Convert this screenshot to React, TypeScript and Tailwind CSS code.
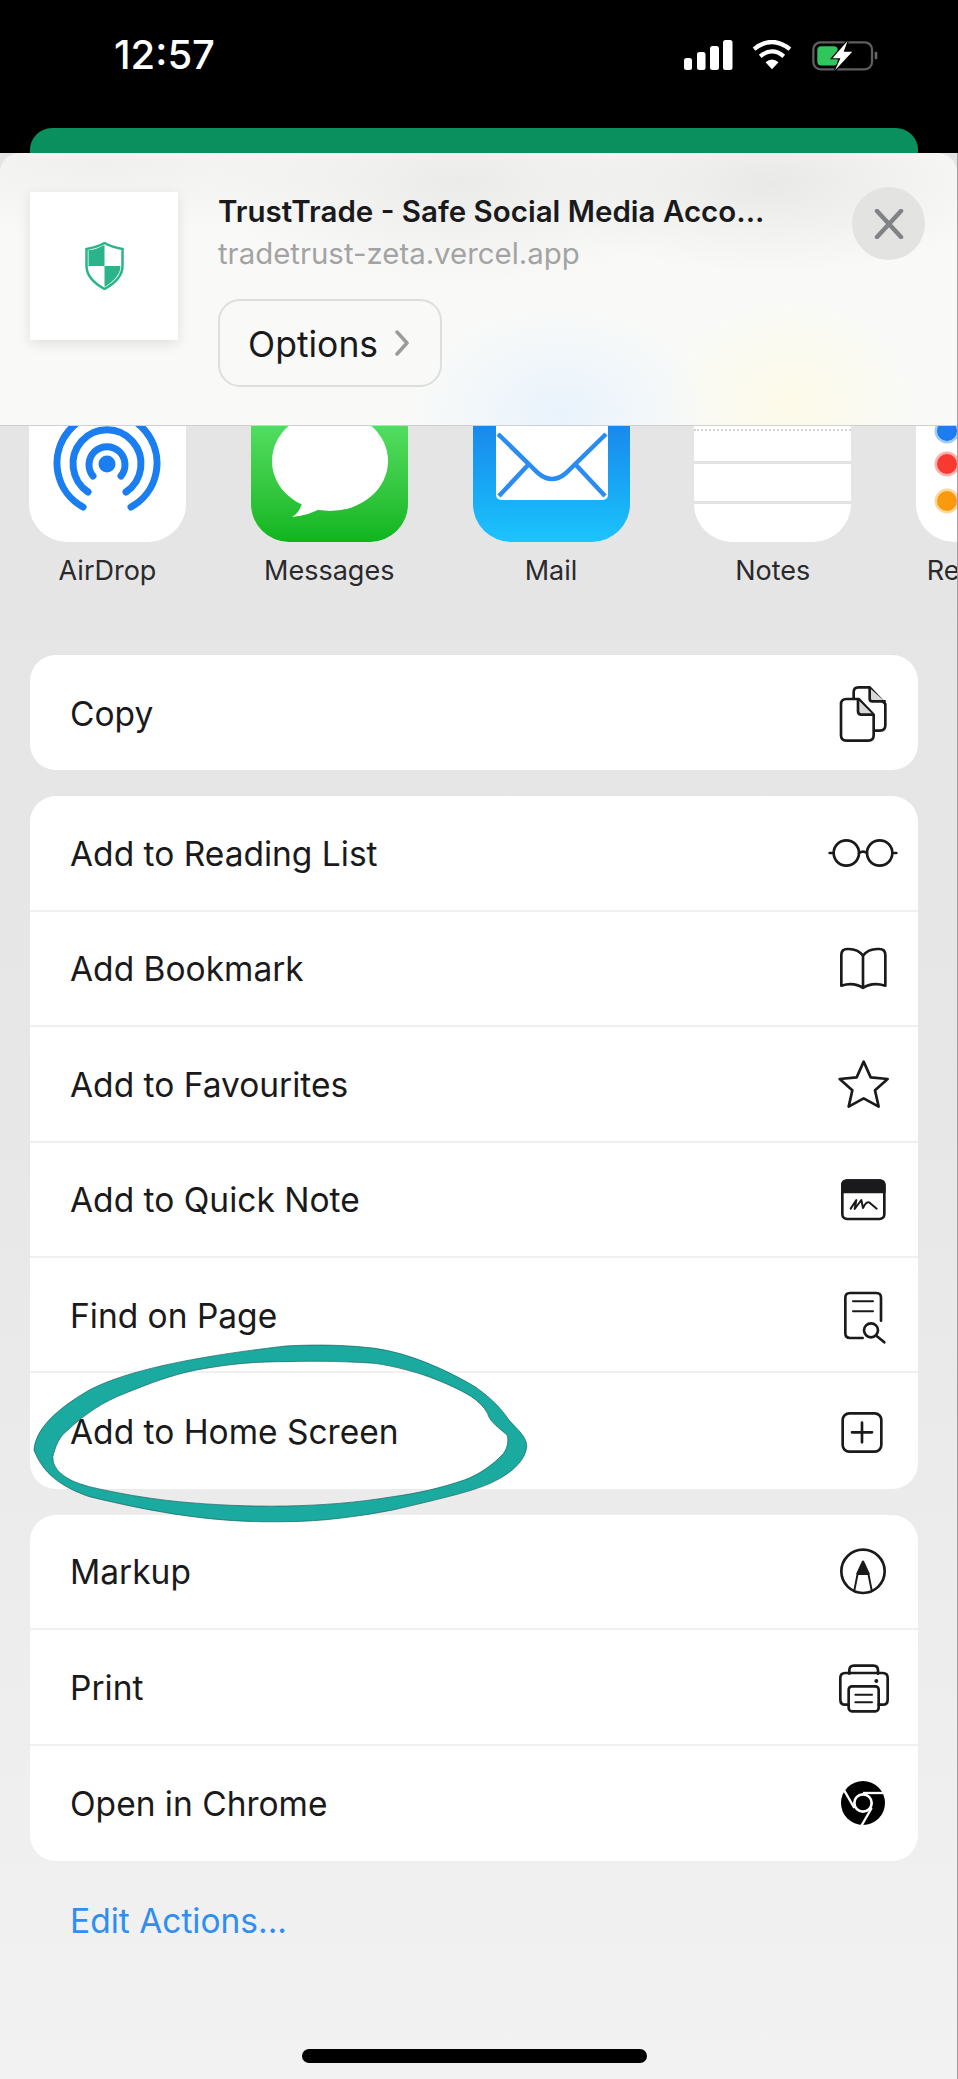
import * as React from 'react';

const font = 'font-["Inter","Noto_Sans",sans-serif]';
const ink = '#1a1a1c';

// icons are drawn on a 210 unit square shown at 70px
function RowIcon({ children }: { children: React.ReactNode }) {
    return (
        <svg
            viewBox="0 0 210 210"
            width={70}
            height={70}
            fill="none"
            stroke={ink}
            strokeWidth={8}
            strokeLinecap="round"
            strokeLinejoin="round"
        >
            {children}
        </svg>
    );
}

const CopyIcon = () => (
    <RowIcon>
        <path d="M77 60V42Q77 28 91 28H125L172 78V142Q172 158 156 158H140" />
        <path d="M125 30V62Q125 70 133 70H170" fill="#d8d8d8" />
        <path d="M55 63H92L137 110V172Q137 188 121 188H55Q39 188 39 172V79Q39 63 55 63Z" fill="#fff" />
        <path d="M90 65V100Q90 110 100 110H135" fill="#d8d8d8" />
    </RowIcon>
);

const GlassesIcon = () => (
    <RowIcon>
        <circle cx="55" cy="105" r="38" />
        <circle cx="155" cy="105" r="38" />
        <path d="M93 105Q105 97 117 105M5 105H17M193 105H205" />
    </RowIcon>
);

const BookIcon = () => (
    <RowIcon>
        <path d="M105 68Q90 48 62 48H58Q40 48 40 66V158Q78 146 105 165Q132 146 172 158V66Q172 48 154 48H148Q120 48 105 68V165" />
    </RowIcon>
);

const StarIcon = () => (
    <RowIcon>
        <path d="M107 38L128 85L179 90L141 124L152 173L107 148L62 173L73 124L35 90L86 85Z" />
    </RowIcon>
);

const QuickNoteIcon = () => (
    <RowIcon>
        <rect x="43" y="50" width="126" height="115" rx="14" />
        <path d="M43 64Q43 50 57 50H155Q169 50 169 64V84H43Z" fill={ink} />
        <path d="M68 134L85 108L80 135L100 108L105 132Q115 110 125 116L146 134" strokeWidth={6} />
    </RowIcon>
);

const FindIcon = () => (
    <RowIcon>
        <path d="M159 122V53Q159 39 145 39H66Q52 39 52 53V160Q52 174 66 174H104" />
        <path d="M75 64H135M75 94H135" strokeWidth={6} />
        <circle cx="129" cy="151" r="21" />
        <path d="M145 167L169 187" />
    </RowIcon>
);

const HomeIcon = () => (
    <RowIcon>
        <rect x="44" y="52" width="116" height="115" rx="20" />
        <path d="M102 80V139M72 109H132" />
    </RowIcon>
);

const MarkupIcon = () => (
    <RowIcon>
        <circle cx="105" cy="106" r="65" />
        <path d="M105 78L89 113H121Z" fill={ink} />
        <path d="M89 113L79 163M121 113L131 163" strokeWidth={6} />
    </RowIcon>
);

const PrintIcon = () => (
    <RowIcon>
        <path d="M64 65V55Q64 41 78 41H136Q150 41 150 55V65" />
        <path d="M62 158H52Q37 158 37 143V78Q37 63 52 63H164Q179 63 179 78V143Q179 158 164 158H152" />
        <rect x="62" y="103" width="90" height="75" rx="10" />
        <path d="M82 128H132M82 151H132" strokeWidth={6} />
        <circle cx="145" cy="87" r="6" fill={ink} stroke="none" />
    </RowIcon>
);

const ChromeIcon = () => (
    <RowIcon>
        <circle cx="105" cy="105" r="66" fill="#000" stroke="none" />
        <circle cx="105" cy="105" r="26" fill="#000" stroke="#fff" strokeWidth={8} />
        <path d="M105 75H172" stroke="#fff" strokeWidth={7} strokeLinecap="butt" />
        <path d="M105 75H172" stroke="#fff" strokeWidth={7} strokeLinecap="butt" transform="rotate(120 105 105)" />
        <path d="M105 75H172" stroke="#fff" strokeWidth={7} strokeLinecap="butt" transform="rotate(240 105 105)" />
    </RowIcon>
);

type Row = { label: string; icon: React.ReactNode };

function RowGroup({ rows }: { rows: Row[] }) {
    return (
        <div className="ml-[30px] mr-[39px] rounded-[26px] bg-white overflow-hidden divide-y-2 divide-[#f0f0f0]">
            {rows.map((row) => (
                <div key={row.label} className="flex h-[115.4px] items-center justify-between pl-[40px] pr-[20px]">
                    <span className="pt-[2px] text-[33.5px] text-[#1a1a1c]">{row.label}</span>
                    <span className="flex">{row.icon}</span>
                </div>
            ))}
        </div>
    );
}

function AppTile({ label, className, children }: { label: string; className?: string; children: React.ReactNode }) {
    return (
        <div className="flex w-[157px] shrink-0 flex-col items-center">
            <div className={'h-[155px] w-[157px] overflow-hidden rounded-[38px] ' + (className ?? 'bg-white')}>{children}</div>
            <span className="mt-[12px] whitespace-nowrap text-[27px] leading-[34px] text-[#2a2a2c]">{label}</span>
        </div>
    );
}

function StatusBar() {
    return (
        <div className="flex items-center justify-between pl-[114px] pr-[80px] pt-[32px]">
            <span className="text-[40px] font-medium leading-[46px] text-white">12:57</span>
            <div className="flex items-center">
                <svg viewBox="0 0 50 30" width={50} height={30} fill="#fff">
                    <rect x="1" y="18" width="8" height="12" rx="2.5" />
                    <rect x="14" y="12" width="8.5" height="18" rx="2.5" />
                    <rect x="27" y="6" width="9" height="24" rx="2.5" />
                    <rect x="40" y="0" width="9.5" height="30" rx="2.5" />
                </svg>
                <svg className="ml-[19px]" viewBox="0 0 120 92" width={40} height={30} fill="none" stroke="#fff" strokeWidth={13}>
                    <path d="M60 90L40 68Q60 52 80 68Z" fill="#fff" stroke="none" />
                    <path d="M24 50Q60 20 96 50" />
                    <path d="M5 28Q60 -16 115 28" />
                </svg>
                <svg className="ml-[20px]" viewBox="0 0 200 94" width={66} height={31}>
                    <rect x="4" y="7" width="178" height="82" rx="22" fill="none" stroke="#5e5e5e" strokeWidth={7} />
                    <rect x="16" y="19" width="62" height="58" rx="12" fill="#2fc65b" />
                    <rect x="190" y="36" width="8" height="22" rx="3" fill="#666" />
                    <path d="M108 2L62 55H86L70 92L122 36H96Z" fill="#fff" stroke="#000" strokeWidth={7} paintOrder="stroke" />
                </svg>
            </div>
        </div>
    );
}

function ShieldLogo() {
    return (
        <svg viewBox="0 0 38 48" width={39} height={48}>
            <path d="M19 1C26 5 31 6 37 7V24C37 34 28 42 19 47C10 42 1 34 1 24V7C7 6 12 5 19 1Z" fill="#fff" stroke="#2bb38a" strokeWidth={2.5} />
            <path d="M19 3C13 6 8 8 3 8V24H19Z" fill="#2bb38a" />
            <path d="M19 24H35C35 33 27 40 19 45Z" fill="#2bb38a" />
        </svg>
    );
}

function ShareHeader() {
    return (
        <div className="relative z-10 flex h-[273px] items-start rounded-t-[20px] border-b border-[#cfcfcf] bg-[#f9faf8] bg-[radial-gradient(ellipse_250px_100px_at_460px_30px,#ebebea,transparent),radial-gradient(ellipse_240px_90px_at_770px_30px,#e9e9e7,transparent),radial-gradient(ellipse_300px_70px_at_100px_10px,#f0f1ee,transparent),radial-gradient(ellipse_150px_110px_at_560px_260px,#e9f3fc,transparent),radial-gradient(ellipse_130px_110px_at_790px_250px,#fdfae8,transparent)] pl-[30px] pr-[32px] pt-[34px]">
            <div className="mt-[5px] flex h-[148px] w-[148px] shrink-0 items-center justify-center bg-white shadow-[0_4px_12px_rgba(0,0,0,0.1)]">
                <ShieldLogo />
            </div>
            <div className="ml-[40px] mt-[4px] flex flex-1 flex-col items-start">
                <span className="text-[29.5px] font-semibold leading-[40px] text-[#1a1a1c]">TrustTrade - Safe Social Media Acco...</span>
                <span className="mt-[3px] text-[29.4px] leading-[40px] text-[#a3a3a3]">tradetrust-zeta.vercel.app</span>
                <div className="mt-[25px] flex h-[88px] w-[224px] items-center rounded-[22px] border-2 border-[#dededc] pl-[28px]">
                    <span className="pt-[4px] text-[35.5px] text-[#1a1a1c]">Options</span>
                    <svg className="ml-[16px]" viewBox="0 0 16 26" width={16} height={26} fill="none" stroke="#9b9b9b" strokeWidth={3.5} strokeLinecap="round" strokeLinejoin="round">
                        <path d="M3 2L13 13L3 24" />
                    </svg>
                </div>
            </div>
            <div className="flex h-[73px] w-[73px] shrink-0 items-center justify-center rounded-full bg-[#e3e4e2]">
                <svg viewBox="0 0 30 30" width={30} height={30} fill="none" stroke="#808285" strokeWidth={4.5} strokeLinecap="round">
                    <path d="M3 2L27 28M27 2L3 28" />
                </svg>
            </div>
        </div>
    );
}

function AppsRow() {
    return (
        <div className="h-[229px] overflow-hidden">
            <div className="-mt-[39px] flex gap-[64.75px] pl-[29px]">
                <AppTile label="AirDrop">
                    <svg viewBox="0 0 157 155" width={157} height={155} fill="none" stroke="#1a7df0" strokeWidth={7} strokeLinecap="round">
                        <path d="M54 120A50 50 0 1 1 102 120" />
                        <path d="M59 105A34 34 0 1 1 97 105" />
                        <path d="M64 89A18 18 0 1 1 92 89" />
                        <circle cx="78" cy="77" r="8.5" fill="#1a7df0" stroke="none" />
                    </svg>
                </AppTile>
                <AppTile label="Messages" className="bg-gradient-to-b from-[#62ea70] to-[#0bb51d]">
                    <svg viewBox="0 0 157 155" width={157} height={155} fill="#fff">
                        <ellipse cx="79" cy="74" rx="58" ry="50" />
                        <path d="M52 112Q50 125 41 130Q60 128 72 120Z" />
                    </svg>
                </AppTile>
                <AppTile label="Mail" className="bg-gradient-to-b from-[#1d74e6] to-[#1cc4fc]">
                    <svg viewBox="0 0 157 155" width={157} height={155} fill="none">
                        <rect x="23" y="20" width="112" height="93" rx="5" fill="#fff" />
                        <path d="M25 47L65 86Q79 98 93 86L133 47M26 109L55 78M132 109L103 78" stroke="#2a8cf0" strokeWidth={4.5} />
                    </svg>
                </AppTile>
                <AppTile label="Notes">
                    <div className="mt-[42px] border-t-2 border-dotted border-[#d4d4d4]" />
                    <div className="mt-[30px] h-[3px] bg-[#e2e2e2]" />
                    <div className="mt-[37px] h-[3px] bg-[#e2e2e2]" />
                </AppTile>
                <AppTile label="Reminders">
                    <svg viewBox="0 0 157 155" width={157} height={155}>
                        <circle cx="31" cy="44" r="10" fill="#1a7df0" stroke="#1a7df0" strokeOpacity={0.4} strokeWidth={5} />
                        <circle cx="31" cy="77" r="10" fill="#f93a30" stroke="#f93a30" strokeOpacity={0.4} strokeWidth={5} />
                        <circle cx="31" cy="114" r="10" fill="#fb9a0e" stroke="#fb9a0e" strokeOpacity={0.4} strokeWidth={5} />
                    </svg>
                </AppTile>
            </div>
        </div>
    );
}

export default function App() {
    return (
        <div className={'relative h-[2079px] w-[958px] overflow-hidden bg-black ' + font}>
            <div className="h-[128px]">
                <StatusBar />
            </div>
            <div className="ml-[30px] mr-[40px] h-[25px] rounded-t-[22px] bg-[#0a8f5e]" />
            <div className="h-[1926px] border-r border-[#a0a0a0] bg-gradient-to-b from-[#e4e4e4] via-[#e7e7e7] to-[#f2f2f2]">
                <ShareHeader />
                <AppsRow />
                <RowGroup rows={[{ label: 'Copy', icon: <CopyIcon /> }]} />
                <div className="h-[26px]" />
                <RowGroup
                    rows={[
                        { label: 'Add to Reading List', icon: <GlassesIcon /> },
                        { label: 'Add Bookmark', icon: <BookIcon /> },
                        { label: 'Add to Favourites', icon: <StarIcon /> },
                        { label: 'Add to Quick Note', icon: <QuickNoteIcon /> },
                        { label: 'Find on Page', icon: <FindIcon /> },
                        { label: 'Add to Home Screen', icon: <HomeIcon /> },
                    ]}
                />
                <div className="h-[26px]" />
                <RowGroup
                    rows={[
                        { label: 'Markup', icon: <MarkupIcon /> },
                        { label: 'Print', icon: <PrintIcon /> },
                        { label: 'Open in Chrome', icon: <ChromeIcon /> },
                    ]}
                />
                <div className="pl-[70px] pt-[38px] text-[33.5px] leading-[44px] text-[#2f8ff0]">Edit Actions...</div>
                <div className="ml-[302px] mt-[106px] h-[14px] w-[345px] rounded-full bg-black" />
            </div>
            {/* hand drawn ring over the page */}
            <svg className="absolute left-0 top-[1320px]" width={560} height={220} viewBox="0 0 1568 660" preserveAspectRatio="none">
                <path
                    fillRule="evenodd"
                    fill="#1aaaa0"
                    stroke="#17625e"
                    strokeWidth={2}
                    d="M95 390C100 320 170 260 250 210C340 160 500 115 800 78C900 72 980 76 1050 85C1150 100 1250 150 1330 200C1370 230 1400 260 1425 300C1450 330 1475 350 1475 380C1470 420 1440 450 1400 475C1350 505 1300 520 1100 570C1000 590 900 605 800 605C650 608 500 595 250 530C170 500 120 460 95 390ZM148 410C155 380 165 350 190 330C240 280 290 245 350 220C420 190 480 165 550 150C650 130 720 125 800 125C900 122 980 125 1050 130C1110 140 1160 155 1200 170C1250 190 1290 210 1320 230C1340 245 1355 260 1365 280C1370 300 1385 315 1420 345C1425 365 1420 385 1410 400C1380 435 1340 465 1300 480C1230 505 1170 520 1100 530C1000 548 900 556 800 558C700 560 600 555 500 545C410 535 330 520 250 500C210 488 190 478 170 460C155 445 148 430 148 410Z"
                />
            </svg>
        </div>
    );
}
